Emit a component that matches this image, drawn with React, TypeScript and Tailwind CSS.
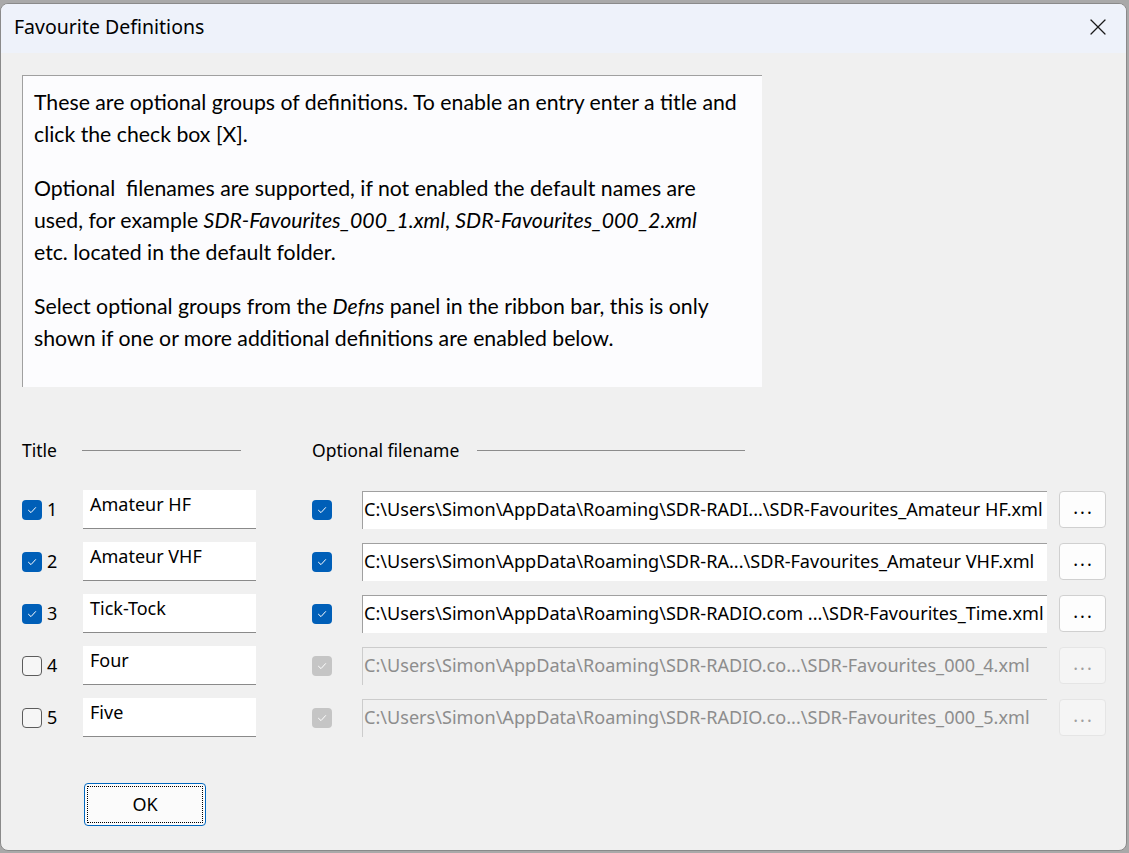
import { X } from 'lucide-react'

type Row = {
  n: number
  title: string
  on: boolean
  path: string
}

const rows: Row[] = [
  { n: 1, title: 'Amateur HF', on: true, path: 'C:\\Users\\Simon\\AppData\\Roaming\\SDR-RADI...\\SDR-Favourites_Amateur HF.xml' },
  { n: 2, title: 'Amateur VHF', on: true, path: 'C:\\Users\\Simon\\AppData\\Roaming\\SDR-RA...\\SDR-Favourites_Amateur VHF.xml' },
  { n: 3, title: 'Tick-Tock', on: true, path: 'C:\\Users\\Simon\\AppData\\Roaming\\SDR-RADIO.com ...\\SDR-Favourites_Time.xml' },
  { n: 4, title: 'Four', on: false, path: 'C:\\Users\\Simon\\AppData\\Roaming\\SDR-RADIO.co...\\SDR-Favourites_000_4.xml' },
  { n: 5, title: 'Five', on: false, path: 'C:\\Users\\Simon\\AppData\\Roaming\\SDR-RADIO.co...\\SDR-Favourites_000_5.xml' },
]

function Tick() {
  return (
    <svg width="12" height="12" viewBox="0 0 12 12" fill="none">
      <path d="M2.5 6.3 L5 8.6 L9.6 3.6" stroke="white" strokeWidth="1" strokeLinecap="round" strokeLinejoin="round" />
    </svg>
  )
}

function Check({ state }: { state: 'on' | 'off' | 'dim' }) {
  if (state === 'off')
    return <div className="w-5 h-5 rounded-[4px] border border-[#5c5c5c] bg-[#f6f6f6] shrink-0" />
  return (
    <div
      className={
        'w-5 h-5 rounded-[4px] flex items-center justify-center shrink-0 ' +
        (state === 'on' ? 'bg-[#005fb8]' : 'bg-[#c5c5c5]')
      }
    >
      <Tick />
    </div>
  )
}

export default function App() {
  return (
    <div className="w-[1129px] h-[853px] bg-[#a9a9a9] pt-[3px] overflow-hidden font-['Noto_Sans',sans-serif] text-black">
      <div className="w-[1127px] h-[848px] rounded-lg border border-[#8a8a8a] bg-[#f0f0f0] overflow-hidden flex flex-col">
        {/* Title bar */}
        <div className="h-[49px] shrink-0 bg-[#eef2fa] flex items-center justify-between pl-[13px] pr-[14px] pb-[3px]">
          <span className="text-[19.5px] leading-none">Favourite Definitions</span>
          <X size={28} strokeWidth={1.05} className="text-[#1a1a1a]" />
        </div>

        <div className="flex-1 flex flex-col pl-[21px]">
          {/* Help box */}
          <div className="mt-[22px] w-[740px] h-[312px] bg-[#fcfcfe] border-t border-l border-[#a0a0a0] pl-[11px] pt-[10px] font-['Lato',sans-serif] text-[21.25px] leading-[32px] whitespace-nowrap">
            <p>
              These are optional groups of definitions. To enable an entry enter a title and
              <br />
              click the check box [X].
            </p>
            <p className="mt-[22px]">
              Optional&nbsp; filenames are supported, if not enabled the default names are
              <br />
              used, for example <i>SDR-Favourites_000_1.xml</i>, <i>SDR-Favourites_000_2.xml</i>
              <br />
              etc. located in the default folder.
            </p>
            <p className="mt-[22px]">
              Select optional groups from the <i>Defns</i> panel in the ribbon bar, this is only
              <br />
              shown if one or more additional definitions are enabled below.
            </p>
          </div>

          {/* Headers */}
          <div className="mt-[50px] h-[26px] flex items-center text-[17.5px]">
            <span className="w-[60px]">Title</span>
            <div className="w-[159px] h-px bg-[#8c8c8c]" />
            <span className="ml-[71px] w-[165px]">Optional filename</span>
            <div className="w-[268px] h-px bg-[#8c8c8c]" />
          </div>

          {/* Rows */}
          <div className="mt-[27px] flex flex-col gap-[13px]">
            {rows.map((r) => (
              <div key={r.n} className="h-[39px] flex items-center">
                <Check state={r.on ? 'on' : 'off'} />
                <span className="ml-[5px] w-[36px] text-[18px]">{r.n}</span>
                <div className="w-[173px] h-[39px] bg-white border-b border-[#8a8a8a] pl-[7px] pt-[1px] text-[18px]">{r.title}</div>
                <div className="ml-[56px]">
                  <Check state={r.on ? 'on' : 'dim'} />
                </div>
                <div
                  className={
                    'ml-[30px] w-[685px] h-[38px] border-t border-l flex items-center pl-[1px] text-[18.1px] whitespace-nowrap overflow-hidden ' +
                    (r.on ? 'bg-white border-[#a0a0a0] text-black' : 'bg-[#f0f0f0] border-[#cccccc] text-[#8d8d8d]')
                  }
                >
                  {r.path}
                </div>
                <div
                  className={
                    'ml-[12px] w-[47px] h-[37px] rounded-[4px] border flex items-center justify-center text-[18px] tracking-[2px] pl-[2px] pb-[4px] ' +
                    (r.on ? 'bg-[#fdfdfd] border-[#d0d0d0] text-black' : 'bg-[#f5f5f5] border-[#e5e5e5] text-[#a0a0a0]')
                  }
                >
                  ...
                </div>
              </div>
            ))}
          </div>

          {/* OK */}
          <div className="mt-[46px] ml-[62px] w-[122px] h-[43px] rounded-[4px] border border-[#0067c0] bg-[#fbfbfb] p-[2px]">
            <div className="w-full h-full border border-dotted border-black flex items-center justify-center text-[18px]">OK</div>
          </div>
        </div>
      </div>
    </div>
  )
}
